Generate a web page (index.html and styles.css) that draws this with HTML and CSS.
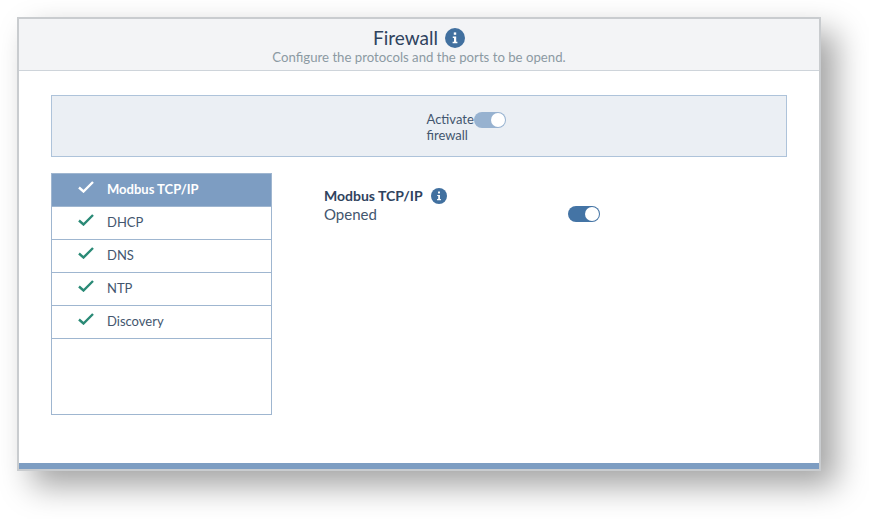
FILE: index.html
```html
<html>
<head>
  <title>Firewall</title>
  <link rel="stylesheet" href="styles.css">
</head>
<body>
  <div class="window">
    <div class="header">
      <div class="title">
        Firewall
        <svg class="info info-big" viewBox="0 0 20 20"><circle cx="10" cy="10" r="10"/><rect x="8.8" y="4.4" width="2.4" height="2.4" fill="#fff"/><path d="M7.8 8.6h3.4v5.2h1.2v1.4H7.6v-1.4h1.4v-3.8H7.8z" fill="#fff"/></svg>
      </div>
      <div class="subtitle">Configure the protocols and the ports to be opend.</div>
    </div>
    <div class="content">
      <div class="activate">
        <div class="activate-label">Activate firewall</div>
        <div class="toggle toggle-light"><span class="knob"></span></div>
      </div>
      <div class="columns">
        <div class="list">
          <div class="row row-active"><svg class="check" viewBox="0 0 16 12"><path d="M1 6.5l4.5 4L15 1"/></svg>Modbus TCP/IP</div>
          <div class="row"><svg class="check" viewBox="0 0 16 12"><path d="M1 6.5l4.5 4L15 1"/></svg>DHCP</div>
          <div class="row"><svg class="check" viewBox="0 0 16 12"><path d="M1 6.5l4.5 4L15 1"/></svg>DNS</div>
          <div class="row"><svg class="check" viewBox="0 0 16 12"><path d="M1 6.5l4.5 4L15 1"/></svg>NTP</div>
          <div class="row"><svg class="check" viewBox="0 0 16 12"><path d="M1 6.5l4.5 4L15 1"/></svg>Discovery</div>
        </div>
        <div class="detail">
          <div class="detail-text">
            <div class="detail-name">
              Modbus TCP/IP
              <svg class="info" viewBox="0 0 20 20"><circle cx="10" cy="10" r="10"/><rect x="8.8" y="4.4" width="2.4" height="2.4" fill="#fff"/><path d="M7.8 8.6h3.4v5.2h1.2v1.4H7.6v-1.4h1.4v-3.8H7.8z" fill="#fff"/></svg>
            </div>
            <div class="detail-state">Opened</div>
          </div>
          <div class="toggle"><span class="knob"></span></div>
        </div>
      </div>
    </div>
    <div class="footer"></div>
  </div>
</body>
</html>
```

FILE: styles.css
```css
html {
  overflow: hidden;
}
body {
  margin: 0;
  padding: 17px 0 0 17px;
  height: 502px;
  overflow: hidden;
  background-color: white;
  font-family: "Lato", sans-serif;
  color: #43566e;
}
.window {
  width: 800px;
  height: 450px;
  border: 2px solid #c9cccf;
  display: flex;
  flex-direction: column;
  background-color: white;
  box-shadow: 15px 15px 30px rgba(0,0,0,0.36);
}
.header {
  height: 51px;
  background-color: #f3f4f6;
  border-bottom: 1px solid #ced4da;
  text-align: center;
}
.title {
  font-size: 19px;
  line-height: 24px;
  padding-top: 7px;
  display: flex;
  justify-content: center;
  align-items: center;
  gap: 6px;
  color: #2f435e;
}
.subtitle {
  font-size: 13.2px;
  line-height: 16px;
  color: #8c9aa3;
  margin-top: -1px;
}
.info {
  width: 16px;
  height: 16px;
  fill: #41709f;
}
.info-big {
  width: 20px;
  height: 20px;
  margin-left: 1px;
}
.content {
  flex: 1;
  padding: 24px 32px 0 32px;
}
.activate {
  height: 60px;
  border: 1px solid #aec3da;
  background-color: #ebeff4;
  display: flex;
  justify-content: center;
  align-items: center;
  padding-left: 94px;
}
.activate-label {
  width: 47px;
  font-size: 13px;
  line-height: 16px;
  margin-top: 2px;
}
.toggle {
  width: 31px;
  height: 16px;
  border-radius: 8px;
  background-color: #4474a5;
  display: flex;
  justify-content: flex-end;
  align-items: center;
  padding-right: 1px;
  flex-shrink: 0;
}
.toggle-light {
  background-color: #97b2d0;
  margin-bottom: 12px;
}
.knob {
  width: 14px;
  height: 14px;
  border-radius: 50%;
  background-color: white;
}
.columns {
  display: flex;
  margin-top: 16px;
}
.list {
  width: 219px;
  height: 240px;
  border: 1px solid #9fb6d0;
}
.row {
  border-bottom: 1px solid #9fb6d0;
  display: flex;
  align-items: center;
  font-size: 13px;
  padding: 0 0 2px 26px;
  box-sizing: border-box;
  height: 33px;
  gap: 13px;
}
.row-active {
  background-color: #7d9dc2;
  color: white;
  font-weight: bold;
}
.check {
  width: 16px;
  height: 12px;
  fill: none;
  stroke: #2a8a76;
  stroke-width: 2.4;
  margin-top: -5px;
}
.row-active .check {
  stroke: white;
}
.detail {
  display: flex;
  width: 276px;
  margin-left: 52px;
  justify-content: space-between;
  align-items: flex-end;
  height: 51px;
}
.detail-name {
  display: flex;
  align-items: center;
  gap: 8px;
  font-size: 14px;
  font-weight: bold;
  line-height: 18px;
  margin-top: -1px;
  color: #2f435e;
}
.detail-state {
  font-size: 15px;
  line-height: 19px;
}
.detail .toggle {
  margin-bottom: 2px;
}
.footer {
  height: 6px;
  background-color: #7d9dc2;
}
```
